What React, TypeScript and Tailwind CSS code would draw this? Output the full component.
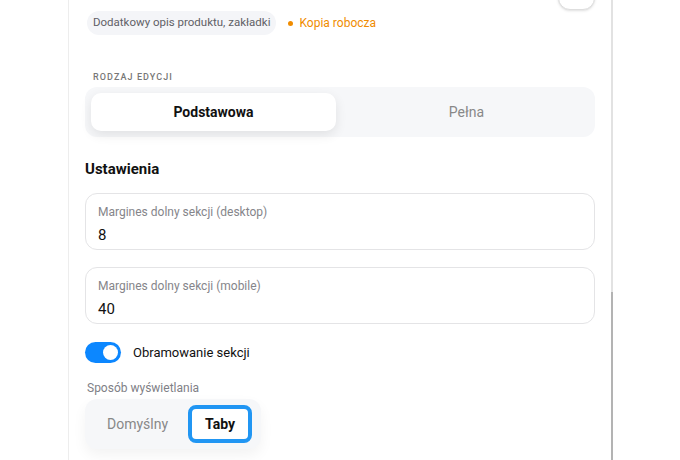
import { useState } from 'react';

const font = { fontFamily: 'Roboto, "Noto Sans", sans-serif' };

function Field({ label, value }: { label: string; value: string }) {
  return (
    <div className="flex h-[57px] flex-col justify-center rounded-[12px] border border-[#e4e4e6] px-3 pt-[4px]">
      <span className="text-[12px] leading-4 text-[#85858a]">{label}</span>
      <span className="mt-[7px] text-[15px] leading-4 text-[#111]">{value}</span>
    </div>
  );
}

export default function App() {
  const [mode, setMode] = useState<'basic' | 'full'>('basic');
  const [border, setBorder] = useState(true);
  const [view, setView] = useState<'default' | 'tabs'>('tabs');

  return (
    <div className="flex h-[460px] w-[680px] overflow-hidden bg-white" style={font}>
      <div className="w-[68px] shrink-0" />
      <div className="flex w-[543px] shrink-0 flex-col border-l border-[#ededed] pl-4 pr-4">
        <div className="-mt-[26px] flex h-9 items-end justify-end">
          <button type="button" className="h-9 w-[37px] rounded-[12px] border border-[#dedede] bg-white shadow-sm" />
        </div>

        <div className="mt-[1px] flex items-center">
          <span className="ml-[2px] flex h-6 items-center rounded-full bg-[#f4f5f8] px-[6px] text-[11.5px] text-[#5f6066]">
            Dodatkowy opis produktu, zakładki
          </span>
          <span className="ml-[12px] h-[5px] w-[5px] rounded-full bg-[#f08c00]" />
          <span className="ml-[6px] text-[12px] text-[#f08c00]">Kopia robocza</span>
        </div>

        <p className="mt-[36px] pl-2 text-[9px] font-medium uppercase leading-3 tracking-[0.12em] text-[#777]">
          Rodzaj edycji
        </p>
        <div className="mt-[4px] flex h-[50px] gap-2 rounded-[12px] bg-[#f6f7f9] p-[6px]">
          <button
            type="button"
            onClick={() => setMode('basic')}
            className={`flex-1 rounded-[10px] text-[14px] ${mode === 'basic' ? 'bg-white font-bold text-[#111] shadow-[0_4px_12px_rgba(0,0,0,0.09)]' : 'text-[#888]'}`}
          >
            Podstawowa
          </button>
          <button
            type="button"
            onClick={() => setMode('full')}
            className={`flex-1 rounded-[10px] text-[14px] ${mode === 'full' ? 'bg-white font-bold text-[#111] shadow-[0_4px_12px_rgba(0,0,0,0.09)]' : 'text-[#888]'}`}
          >
            Pełna
          </button>
        </div>

        <h3 className="mt-[22px] text-[15px] font-bold leading-5 text-[#111]">Ustawienia</h3>

        <div className="mt-[14px] flex flex-col gap-[17px]">
          <Field label="Margines dolny sekcji (desktop)" value="8" />
          <Field label="Margines dolny sekcji (mobile)" value="40" />
        </div>

        <div className="mt-[18px] flex h-[21px] items-center gap-3">
          <button
            type="button"
            onClick={() => setBorder(!border)}
            className={`flex h-[21px] w-[36px] items-center rounded-full px-[3px] ${border ? 'justify-end bg-[#0c87ff]' : 'justify-start bg-[#ccc]'}`}
          >
            <span className="h-[15px] w-[15px] rounded-full bg-white" />
          </button>
          <span className="text-[13px] text-[#111]">Obramowanie sekcji</span>
        </div>

        <p className="mt-[17px] pl-[2px] text-[12px] leading-4 text-[#808086]">Sposób wyświetlania</p>
        <div className="mt-[3px] flex h-[50px] w-fit items-center gap-[4px] rounded-[12px] bg-[#f6f7f9] p-[6px] pr-[9px] shadow-[0_6px_14px_rgba(0,0,0,0.05)]">
          <button
            type="button"
            onClick={() => setView('default')}
            className={`h-[38px] rounded-[8px] px-4 text-[14px] ${view === 'default' ? 'border-4 border-[#2196f3] bg-white font-bold text-[#111]' : 'text-[#888]'}`}
          >
            Domyślny
          </button>
          <button
            type="button"
            onClick={() => setView('tabs')}
            className={`h-[38px] rounded-[8px] px-[13px] text-[14px] ${view === 'tabs' ? 'border-4 border-[#2196f3] bg-white font-bold text-[#111]' : 'text-[#888]'}`}
          >
            Taby
          </button>
        </div>
      </div>
      <div className="flex w-[2px] shrink-0 flex-col">
        <div className="h-[292px] bg-[#e2e2e2]" />
        <div className="flex-1 bg-[#b3b3b3]" />
      </div>
      <div className="flex-1" />
    </div>
  );
}
